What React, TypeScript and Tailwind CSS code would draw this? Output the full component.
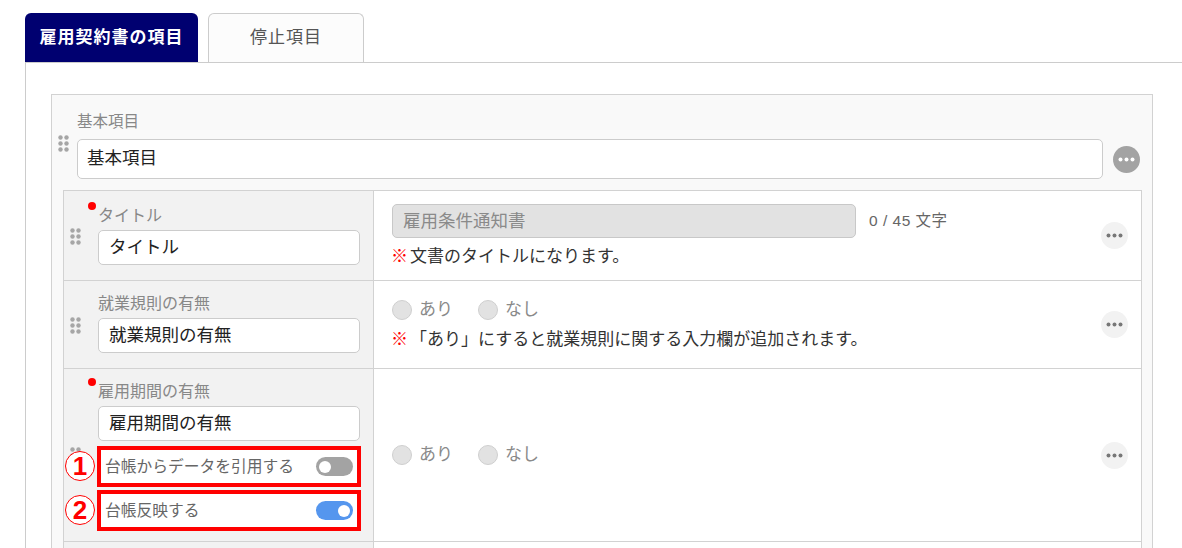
const font = "[font-family:'Liberation_Sans','Noto_Sans_CJK_JP',sans-serif]";

function Grip({ className = "" }: { className?: string }) {
  return (
    <svg width="11" height="17" viewBox="0 0 11 17" className={className} fill="#a6a6a6">
      {[2.5, 8.5].map((x) =>
        [2.5, 8.5, 14.5].map((y) => <circle key={`${x}-${y}`} cx={x} cy={y} r="2.2" />),
      )}
    </svg>
  );
}

function MoreButton({ dark = false }: { dark?: boolean }) {
  return (
    <div className={`flex h-[27px] w-[27px] shrink-0 items-center justify-center rounded-full ${dark ? "bg-[#a3a3a3]" : "bg-[#f2f2f2]"}`}>
      <svg width="17" height="5" viewBox="0 0 17 5" fill={dark ? "#ffffff" : "#777777"}>
        <circle cx="2.5" cy="2.5" r="2" />
        <circle cx="8.5" cy="2.5" r="2" />
        <circle cx="14.5" cy="2.5" r="2" />
      </svg>
    </div>
  );
}

function Radio({ label }: { label: string }) {
  return (
    <div className="flex items-center gap-[7px]">
      <span className="h-[20px] w-[20px] rounded-full border border-[#cfcfcf] bg-[#e2e2e2]" />
      <span className="text-[17px] leading-[20px] text-[#8a8a8a]">{label}</span>
    </div>
  );
}

function Note({ children }: { children: string }) {
  return (
    <p className="-ml-[1px] text-[17px] leading-[20px] text-[#333333]">
      <span className="mr-[2px] text-[#ff0000]">※</span>
      {children}
    </p>
  );
}

function NameInput({ value }: { value: string }) {
  return (
    <div className="ml-[34px] flex h-[35px] w-[262px] items-center rounded-[5px] border border-[#cccccc] bg-white pl-[10px] text-[17.5px] text-[#222222]">
      {value}
    </div>
  );
}

function Label({ children, required = false }: { children: string; required?: boolean }) {
  return (
    <div className="relative ml-[34px] h-[20px] text-[16px] leading-[20px] text-[#888888]">
      {required && <span className="absolute left-[-10px] top-[-4px] h-[8px] w-[8px] rounded-full bg-[#ff0000]" />}
      {children}
    </div>
  );
}

function Toggle({ on }: { on: boolean }) {
  return (
    <span className={`flex h-[19px] w-[37px] items-center rounded-full px-[3px] ${on ? "justify-end bg-[#5596ee]" : "bg-[#a3a3a3]"}`}>
      <span className="h-[12px] w-[12px] rounded-full bg-white" />
    </span>
  );
}

function ToggleRow({ label, on, mark, className }: { label: string; on: boolean; mark: string; className: string }) {
  return (
    <div className={`relative ml-[33px] flex h-[41px] w-[264px] items-center justify-between border-[4px] border-[#ff0000] bg-white pl-[4px] pr-[4px] text-[15.75px] text-[#666666] ${className}`}>
      {label}
      <Toggle on={on} />
      <span className="absolute left-[-36px] top-[1px] flex h-[30px] w-[30px] items-center justify-center rounded-full border border-[#ff0000] bg-white text-[26px] font-bold leading-none text-[#ff0000]">
        {mark}
      </span>
    </div>
  );
}

export default function App() {
  return (
    <div className={`h-[548px] w-[1182px] overflow-hidden bg-white pl-[25px] pt-[13px] ${font}`}>
      <div className="flex h-[49px] gap-[10px]">
        <div className="flex w-[173px] items-center justify-center rounded-t-[6px] bg-[#000070] text-[17px] font-bold tracking-[1px] text-white">
          雇用契約書の項目
        </div>
        <div className="flex w-[156px] items-center justify-center rounded-t-[6px] border border-b-0 border-[#cccccc] bg-[#fcfcfc] text-[17px] tracking-[1px] text-[#555555]">
          停止項目
        </div>
      </div>
      <div className="h-[486px] border-l border-t border-[#cccccc] pl-[25px] pt-[31px]">
        <div className="w-[1102px] border border-[#d2d2d2] bg-[#f9f9f9] pl-[11px] pt-[17px]">
          <div className="ml-[14px] h-[20px] text-[15.5px] leading-[20px] text-[#888888]">基本項目</div>
          <div className="relative mt-[7px] flex items-center pl-[14px]">
            <Grip className="absolute left-[-5px] top-[-4px]" />
            <div className="flex h-[40px] w-[1026px] items-center rounded-[5px] border border-[#cccccc] bg-white pb-[2px] pl-[9px] text-[17.5px] text-[#222222]">
              基本項目
            </div>
            <div className="ml-[10px] mt-[1px]">
              <MoreButton dark />
            </div>
          </div>

          <div className="mt-[11px] w-[1079px] border border-b-0 border-[#d2d2d2] bg-white">
            <div className="flex h-[90px] border-b border-[#d2d2d2]">
              <div className="relative w-[310px] shrink-0 border-r border-[#d2d2d2] bg-[#f2f2f2] pt-[15px]">
                <Label required>タイトル</Label>
                <div className="mt-[4px]"><NameInput value="タイトル" /></div>
                <Grip className="absolute left-[6px] top-[37px]" />
              </div>
              <div className="flex flex-1 items-center pr-[13px]">
                <div className="flex-1 pl-[18px]">
                  <div className="flex items-center">
                    <div className="flex h-[34px] w-[464px] items-center rounded-[5px] border border-[#c8c8c8] bg-[#e2e2e2] pl-[10px] text-[17.5px] text-[#8a8a8a]">
                      雇用条件通知書
                    </div>
                    <span className="ml-[13px] text-[15.5px] tracking-[0.5px] text-[#666666]">0 / 45 文字</span>
                  </div>
                  <div className="mt-[9px]"><Note>文書のタイトルになります。</Note></div>
                </div>
                <MoreButton />
              </div>
            </div>

            <div className="flex h-[88px] border-b border-[#d2d2d2]">
              <div className="relative w-[310px] shrink-0 border-r border-[#d2d2d2] bg-[#f2f2f2] pt-[13px]">
                <Label>就業規則の有無</Label>
                <div className="mt-[4px]"><NameInput value="就業規則の有無" /></div>
                <Grip className="absolute left-[6px] top-[36px]" />
              </div>
              <div className="flex flex-1 items-center pr-[13px]">
                <div className="flex-1 pl-[18px]">
                  <div className="flex gap-[25px]">
                    <Radio label="あり" />
                    <Radio label="なし" />
                  </div>
                  <div className="mt-[10px]"><Note>「あり」にすると就業規則に関する入力欄が追加されます。</Note></div>
                </div>
                <MoreButton />
              </div>
            </div>

            <div className="flex h-[173px] border-b border-[#d2d2d2]">
              <div className="relative w-[310px] shrink-0 border-r border-[#d2d2d2] bg-[#f2f2f2] pt-[13px]">
                <Label required>雇用期間の有無</Label>
                <div className="mt-[4px]"><NameInput value="雇用期間の有無" /></div>
                <Grip className="absolute left-[6px] top-[78px]" />
                <ToggleRow className="mt-[5px]" label="台帳からデータを引用する" on={false} mark="1" />
                <ToggleRow className="mt-[3px]" label="台帳反映する" on mark="2" />
              </div>
              <div className="flex flex-1 items-center pr-[13px]">
                <div className="flex flex-1 gap-[25px] pl-[18px]">
                  <Radio label="あり" />
                  <Radio label="なし" />
                </div>
                <MoreButton />
              </div>
            </div>
            <div className="flex h-[20px]">
              <div className="w-[310px] border-r border-[#d2d2d2] bg-[#f2f2f2]" />
            </div>
          </div>
        </div>
      </div>
    </div>
  );
}
